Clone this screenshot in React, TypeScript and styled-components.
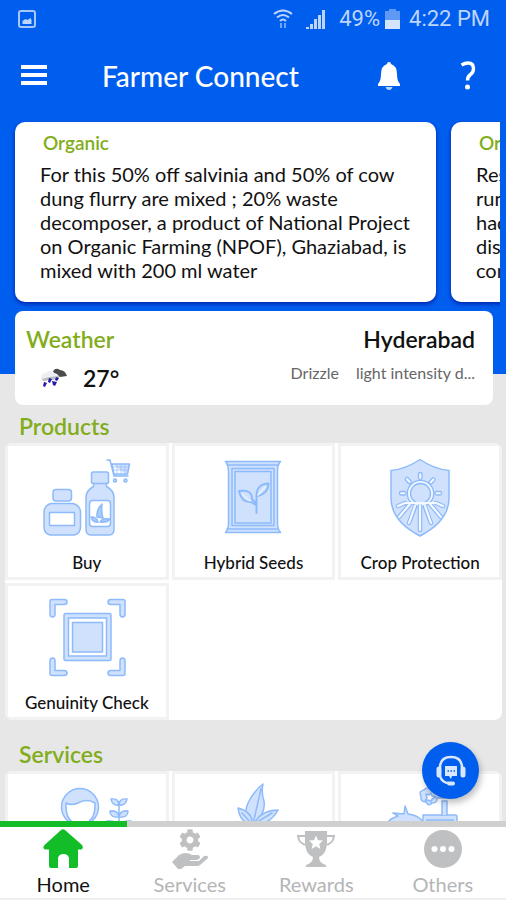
import React, { useState } from "react";
import styled, { createGlobalStyle } from "styled-components";
import { FaCog } from "react-icons/fa";

const GlobalStyle = createGlobalStyle`
  * { box-sizing: border-box; }
  html, body, #root { height: 100%; }
  body { margin: 0; font-family: Lato, "Noto Sans", sans-serif; color: #111; background: #e7e7e7; }
  h1, h2, p { margin: 0; }
  button { font: inherit; color: inherit; border: 0; padding: 0; background: none; cursor: pointer; }
  svg { display: block; flex: none; }
`;

const BLUE = "#005eee";
const GREEN = "#82ad1b";

const Screen = styled.div`
  position: relative;
  display: flex;
  flex-direction: column;
  height: 100vh;
  overflow: hidden;
`;

const Content = styled.main`
  flex: 1;
  min-height: 0;
  overflow: hidden;
`;

const Hero = styled.div`
  background: ${BLUE};
  padding-bottom: 63px;
`;

const StatusBar = styled.div`
  display: flex;
  align-items: center;
  height: 38px;
  padding: 0 16px 0 18px;
  color: #bdd5fc;
  font: 22px/24px Roboto, sans-serif;
`;

const StatusGroup = styled.div`
  display: flex;
  align-items: center;
  margin-left: auto;
`;

const SignalIcon = styled.svg`
  margin: 0 13px;
`;

const BatteryIcon = styled.svg`
  margin: 0 9px 0 5px;
`;

const AppBar = styled.header`
  display: flex;
  align-items: center;
  height: 76px;
  padding: 0 23px 0 19px;
  color: #fff;
`;

const IconButton = styled.button`
  display: flex;
  align-items: center;
  justify-content: center;
  width: 30px;
  height: 40px;
`;

const Title = styled.h1`
  flex: 1;
  margin-left: 53px;
  font-size: 28px;
  font-weight: 500;
  line-height: 34px;
`;

const HelpButton = styled(IconButton)`
  margin-left: 49px;
`;

const Carousel = styled.div`
  display: flex;
  gap: 15px;
  margin-right: 6px;
  padding: 8px 0 9px 15px;
  overflow: hidden;
`;

const TipCard = styled.article`
  flex: 0 0 calc(100% - 64px);
  height: 180px;
  padding: 9px 25px;
  border-radius: 10px;
  background: #fff;
  box-shadow: 0 2px 4px #0023a8;
`;

const TipTitle = styled.h2`
  padding-left: 3px;
  color: ${GREEN};
  font-size: 19px;
  font-weight: 600;
  line-height: 24px;
`;

const TipText = styled.p`
  margin-top: 7px;
  font-size: 20px;
  line-height: 24px;
  white-space: pre-line;
`;

const WeatherCard = styled.section`
  position: relative;
  display: flex;
  justify-content: space-between;
  height: 94px;
  margin: -63px 13px 0 15px;
  padding: 14px 18px 0 11px;
  border-radius: 8px;
  background: #fff;
`;

const WeatherColumn = styled.div<{ $end?: boolean }>`
  display: flex;
  flex-direction: column;
  align-items: ${(p) => (p.$end ? "flex-end" : "flex-start")};
  gap: ${(p) => (p.$end ? 8 : 12)}px;
`;

const SectionTitle = styled.h2`
  color: ${GREEN};
  font-size: 23px;
  font-weight: 600;
  line-height: 28px;
`;

const City = styled.p`
  font-size: 23px;
  font-weight: 600;
  line-height: 28px;
`;

const Temperature = styled.div`
  display: flex;
  align-items: center;
  gap: 16px;
  padding-left: 14px;
  font-size: 23px;
  font-weight: 600;
  line-height: 26px;
`;

const Conditions = styled.div`
  display: flex;
  gap: 17px;
  color: #666;
  font-size: 16px;
  line-height: 24px;
`;

const Section = styled.section<{ $top: number }>`
  padding: ${(p) => p.$top}px 4px 0 5px;

  ${SectionTitle} {
    padding-left: 14px;
  }
`;

const Panel = styled.div`
  display: grid;
  grid-template-columns: repeat(3, 1fr);
  gap: 3px;
  margin-top: 3px;
  border-radius: 8px;
  overflow: hidden;
  background: #fff;
`;

const Tile = styled.button`
  display: flex;
  flex-direction: column;
  align-items: center;
  height: 137px;
  padding-top: 7px;
  border: 3px solid #f2f2f2;
`;

const TileLabel = styled.span`
  margin-top: 10px;
  font-size: 17px;
  font-weight: 500;
  line-height: 20px;
  white-space: nowrap;
`;

const TabBar = styled.nav`
  display: grid;
  grid-template-columns: repeat(4, 1fr);
  height: 79px;
  border-bottom: 2px solid #eee;
  background: #fff;
`;

const Tab = styled.button<{ $active: boolean }>`
  display: flex;
  flex-direction: column;
  align-items: center;
  gap: 3px;
  padding-top: 2px;
  border-top: 6px solid ${(p) => (p.$active ? "#13bd27" : "#d0d0d0")};
  color: ${(p) => (p.$active ? "#111" : "#b4b5b7")};
  font-size: 20px;
  line-height: 24px;
`;

const HandGear = styled.span`
  display: flex;
  flex-direction: column;
  align-items: center;
  height: 40px;
  color: #bfc0c2;
`;

const SupportButton = styled.button`
  position: absolute;
  right: 27px;
  bottom: 101px;
  display: flex;
  align-items: center;
  justify-content: center;
  width: 57px;
  height: 57px;
  border-radius: 50%;
  background: ${BLUE};
  box-shadow: 2px 4px 6px rgba(0, 0, 0, 0.25);
`;

const LINE = "#8dbafa";
const FILL = "#cfe1fd";

function Art({ children }: { children: React.ReactNode }) {
  return (
    <svg width="120" height="90" viewBox="0 0 120 90" fill={FILL} stroke={LINE} strokeWidth="1.5" strokeLinejoin="round" strokeLinecap="round" aria-hidden="true">
      {children}
    </svg>
  );
}

const BuyArt = () => (
  <Art>
    <rect x="26" y="36.500" width="18.500" height="11.500" rx="3" />
    <path d="M24 50.500h22q7.500 2 7.500 9v14q0 7-6 8.500H23q-6-1.500-6-8.500v-14q0-7 7-9Z" />
    <path d="M22.500 59.500h25v13h-25Z" fill="#fff" />
    <path d="M66.500 19h13q2 0 2 2v8q0 1.500-2 1.500v3q7.500 4 7.500 11V76q0 6-5 6H64q-5 0-5-6V44.500q0-7 7.500-11v-3q-2 0-2-1.500v-8q0-2 2-2Z" />
    <path d="M66.500 30.500h13" />
    <rect x="62.500" y="47.500" width="21" height="26" rx="3" fill="#fff" />
    <path d="M70 64q-1-7 5-13-1 8 1 14ZM71 69q-1-5-7-5 2 6 7 5ZM73 69q2-4 10-3-3 4-10 3Z" fill="#a9ccfc" />
    <path d="M80 7h3l4 16h14M85 11h17.500l-2 10H87Z" />
    <path d="M90 12v8M94 12v8M98 12v8M86 14h15M87 17h14" strokeWidth=".6" />
    <circle cx="88" cy="27.500" r="1.500" /><circle cx="98.500" cy="27.500" r="1.500" />
  </Art>
);

const SeedsArt = () => (
  <Art>
    <path d="M32.500 8.500h55q-3 3-3 10v51q0 7 3 10h-55q3-3 3-10v-51q0-7-3-10Z" />
    <path d="M34 12h51M34 76h51" />
    <path d="M39 15.500h42v57H39Z" fill="none" />
    <path d="M42 18.500h36V70H42Z" />
    <path d="M63.500 60V43q0-12 12-12.500Q75 41 64 43M63.500 52q-3-1-5-3-10 1-12.500-11 13-2 13 8l4 4" strokeWidth="2" />
    <path d="m65 42 7-8M57 48l-8-7" stroke="#e7f0fe" />
  </Art>
);

const ShieldArt = () => (
  <Art>
    <path d="M60 6.500Q74 16 89 17.500V45Q89 68 60 83 31 68 31 45V17.500Q46 16 60 6.500Z" />
    <g fill="#f2f7ff" strokeWidth="1.300">
      <rect x="58.500" y="19.500" width="3.500" height="7" rx="1.500" />
      <rect x="58.500" y="19.500" width="3.500" height="7" rx="1.500" transform="rotate(-43 60 40.500)" />
      <rect x="58.500" y="19.500" width="3.500" height="7" rx="1.500" transform="rotate(43 60 40.500)" />
      <rect x="39.500" y="38.500" width="6.500" height="3.500" rx="1.500" />
      <rect x="75" y="38.500" width="6.500" height="3.500" rx="1.500" />
      <circle cx="60.500" cy="40.500" r="13.200" />
      <circle cx="60.500" cy="40.500" r="10" fill={FILL} />
    </g>
    <g stroke={LINE} strokeWidth="4.500"><path d="M60 53v24M55 54l-6 16M65 54l6 16M50 51 39 64M70 51l11 13M45 50l-7 3M76 50l7 3" /></g>
    <g stroke="#f4f8ff" strokeWidth="2.200"><path d="M60 52v25M55 53l-6 17M65 53l6 17M50 51 39 64M70 51l11 13M45 50l-7 3M76 50l7 3M45 50h31" fill="none" /></g>
  </Art>
);

const ScanArt = () => (
  <Art>
    <path d="M25 6.500h12q3 0 3 2.500t-3 2.500h-9V21q0 3-2.500 3t-2.500-3V8.500q0-2 2-2ZM96 6.500H84q-3 0-3 2.500t3 2.500h9V21q0 3 2.500 3t2.500-3V8.500q0-2-2-2ZM25 82.500h12q3 0 3-2.500t-3-2.500h-9V68q0-3-2.500-3T23 68v12.500q0 2 2 2ZM96 82.500H84q-3 0-3-2.500t3-2.500h9V68q0-3 2.500-3t2.500 3v12.500q0 2-2 2Z" />
    <rect x="37" y="20.500" width="47" height="47" rx="1.500" />
    <path d="M41.500 25h38v38h-38Z" fill="#fff" />
    <path d="M45.500 29.500h30v29.500h-30Z" />
  </Art>
);

const FarmerArt = () => (
  <Art>
    <circle cx="53" cy="26" r="18.500" />
    <path d="M39 22q5 3 12 0 9-5 17 0 1 20-15 22Q38 42 39 22Z" fill="#fff" />
    <path d="M92 60V24M92 24q-7 1-8-6 8-1 8 6ZM92 24q7 1 8-6-8-1-8 6ZM92 36q-9 1-9-6 8-1 9 6ZM92 36q9 1 9-6-8-1-9 6ZM92 47q-11 1-12-7 11-1 12 7ZM92 47q11 1 12-7-11-1-12 7Z" />
  </Art>
);

const LeafArt = () => (
  <Art>
    <path d="M60 43q-12-9-4-23 6-11 14-17-2 8 1 17 2 13-11 23ZM60 43 68 8" />
    <path d="M59 43Q47 42 45 27q15 4 14 16ZM59 43 49 32M61 43q7-14 24-14-8 15-24 14ZM61 43l18-11" />
    <path d="M60 43v22" />
  </Art>
);

const MachineryArt = () => (
  <Art>
    <path d="M23 54q1-15 15-19l-5-3 11 1 1-8 3 8q12 1 18 12v12Z" />
    <path d="M63 34h32q2 0 2 2v22H63ZM67 39h26v16H67Z" />
    <path d="M82 34V20h5v14" />
    <path d="M61 15q-3-5 3-6 3-4 7 0 4-2 6 2h7v6h-7q1 5-5 5-3 4-6-1-6 0-5-6Z" />
    <path d="M66 13l3 1 2-2 1 3 4 1-4 2-1 3-2-2-4 1 2-3Z" fill="#fff" />
  </Art>
);

const products = [
  { label: "Buy", Icon: BuyArt },
  { label: "Hybrid Seeds", Icon: SeedsArt },
  { label: "Crop Protection", Icon: ShieldArt },
  { label: "Genuinity Check", Icon: ScanArt },
];

const services = [
  { label: "Farmer Advisory", Icon: FarmerArt },
  { label: "Crop Diagnosis", Icon: LeafArt },
  { label: "Farm Equipment", Icon: MachineryArt },
];

const HomeIcon = () => (
  <svg width="40" height="40" viewBox="0 0 40 40" fill="#13bd27" aria-hidden="true">
    <path d="M17.500 1.500q2.500-2.500 5 0l16 14q2 2 1 4-1 1.500-3 1H35V37q0 2-2 2h-7V29q-1-4-5.500-4T15 29v10H8q-2 0-2-2V20.500H4q-3 .5-3.500-1.500-.5-1.500 1-3Z" />
  </svg>
);

const HandGearIcon = () => (
  <HandGear>
    <FaCog size={22} />
    <svg width="38" height="18" viewBox="0 0 38 18" fill="currentColor" aria-hidden="true">
      <path d="m1 11 7-7q7-4 13 0h5q3 0 3 2t-3 3h-7v1h9l5-5q3-1 4 1 .5 1-1 2l-7 6q-1 1-3 1H14l-4 3H7Z" />
    </svg>
  </HandGear>
);

const TrophyIcon = () => (
  <svg width="40" height="40" viewBox="0 0 40 40" fill="#bfc0c2" aria-hidden="true">
    <path d="M10 7H2q1 9 10 9M30 7h8q-1 9-10 9" fill="none" stroke="#bfc0c2" strokeWidth="2" />
    <path d="M9 2h22v11q0 12-8 15 0 6 7 8v2H10v-2q7-2 7-8-8-3-8-15Z" />
    <path d="m20 6.500 2 4.700 5 .4-3.800 3.300 1.200 5-4.400-2.700-4.400 2.700 1.200-5-3.800-3.300 5-.4Z" fill="#fff" />
  </svg>
);

const OthersIcon = () => (
  <svg width="40" height="40" viewBox="0 0 40 40" aria-hidden="true">
    <circle cx="20" cy="20" r="19" fill="#bfc0c2" />
    <g fill="#fff"><circle cx="11.500" cy="20" r="3" /><circle cx="20" cy="20" r="3" /><circle cx="28.500" cy="20" r="3" /></g>
  </svg>
);

const tabs = [
  { label: "Home", Icon: HomeIcon },
  { label: "Services", Icon: HandGearIcon },
  { label: "Rewards", Icon: TrophyIcon },
  { label: "Others", Icon: OthersIcon },
];

const tips = [
  "For this 50% off salvinia and 50% of cow dung flurry are mixed ; 20% waste decomposer, a product of National Project on Organic Farming (NPOF), Ghaziabad, is mixed with 200 ml water",
  "Residues left in the field after\nrunning the harvester\nhad to be collected and\ndistributed evenly over the\ncompost bed",
];

export default function App() {
  const [active, setActive] = useState("Home");
  return (
    <Screen>
      <GlobalStyle />
      <Content>
        <Hero>
          <StatusBar>
            <svg width="18" height="20" viewBox="0 0 18 20" fill="none" stroke="#a6c7fb" strokeWidth="2" aria-hidden="true">
              <rect x="1" y="2" width="16" height="16" rx="2" />
              <path d="M4.500 15v-3l3-2 2 1 3-2 1 2v4Z" fill="#bdd5fc" stroke="none" />
            </svg>
            <StatusGroup>
              <svg width="20" height="20" viewBox="0 0 20 20" fill="none" stroke="currentColor" strokeWidth="2" aria-hidden="true">
                <path d="M1 5q9-7 18 0M4 8.500q6-5 12 0M7 12q3-3 6 0" />
                <path d="M8 14v5M12 14v5" stroke="#6ea3f6" />
              </svg>
              <SignalIcon width="20" height="20" viewBox="0 0 20 20" fill="currentColor" aria-hidden="true">
                <path d="M0 18h3v2H0ZM4 15h3v5H4ZM8 10h3v10H8ZM12 6h3v14h-3ZM16 1h3v19h-3Z" />
              </SignalIcon>
              <span>49%</span>
              <BatteryIcon width="15" height="20" viewBox="0 0 15 20" aria-hidden="true">
                <path d="M4 0h7v2h4v18H0V2h4Z" fill="#5f99f5" />
                <path d="M0 11h15v9H0Z" fill="#d5e4fd" />
              </BatteryIcon>
              <span>4:22 PM</span>
            </StatusGroup>
          </StatusBar>
          <AppBar>
            <IconButton aria-label="Menu">
              <svg width="28" height="22" viewBox="0 0 28 22" fill="#fff"><path d="M1 0h26v4H1ZM1 8h26v4H1ZM1 16h26v4H1Z" /></svg>
            </IconButton>
            <Title>Farmer Connect</Title>
            <IconButton aria-label="Notifications">
              <svg width="24" height="30" viewBox="0 0 24 30" fill="#fff">
                <path d="M10 3q0-2 2-2t2 2q6 2 6 10 0 7 3 10v2H1v-2q3-3 3-10 0-8 6-10Z" />
                <path d="M8.500 26h7q-1 3-3.500 3t-3.500-3Z" opacity=".75" />
              </svg>
            </IconButton>
            <HelpButton aria-label="Help">
              <svg width="18" height="32" viewBox="0 0 18 32" fill="none" stroke="#fff" strokeWidth="3.400">
                <path d="M2.500 5Q6 3 9 3q5.500 0 5.500 5.500 0 4-3 6-3 2-3 6" />
                <circle cx="8.500" cy="27" r="2.500" fill="#fff" stroke="none" />
              </svg>
            </HelpButton>
          </AppBar>
          <Carousel>
            {tips.map((tip) => (
              <TipCard key={tip}>
                <TipTitle>Organic</TipTitle>
                <TipText>{tip}</TipText>
              </TipCard>
            ))}
          </Carousel>
        </Hero>
        <WeatherCard>
          <WeatherColumn>
            <SectionTitle>Weather</SectionTitle>
            <Temperature>
              <svg width="27" height="20" viewBox="0 0 27 20" aria-hidden="true">
                <path d="M13 3q3-4 7-1 5 0 7 6l-7 1-6-4Z" fill="#4b4b4b" />
                <path d="M1 10q0-5 5-5 3-4 7 0 5 0 6 4v3H2Z" fill="#eceef4" />
                <path d="m2 11 8-2 9-1-1 3-8 1-7 1Z" fill="#bbb" />
                <path d="m4 14 3 1-2 4-2-1ZM9 10l3 1-2 4-2-1ZM12 13l5 1-2 4-2-1ZM16 9l3 1-2 3-2-1Z" fill="#221aa8" />
              </svg>
              <span>27°</span>
            </Temperature>
          </WeatherColumn>
          <WeatherColumn $end>
            <City>Hyderabad</City>
            <Conditions>
              <span>Drizzle</span>
              <span>light intensity d...</span>
            </Conditions>
          </WeatherColumn>
        </WeatherCard>
        <Section $top={7}>
          <SectionTitle>Products</SectionTitle>
          <Panel>
            {products.map(({ label, Icon }) => (
              <Tile key={label}>
                <Icon />
                <TileLabel>{label}</TileLabel>
              </Tile>
            ))}
          </Panel>
        </Section>
        <Section $top={20}>
          <SectionTitle>Services</SectionTitle>
          <Panel>
            {services.map(({ label, Icon }) => (
              <Tile key={label} aria-label={label}>
                <Icon />
              </Tile>
            ))}
          </Panel>
        </Section>
      </Content>
      <SupportButton aria-label="Support chat">
        <svg width="30" height="32" viewBox="0 0 30 32" fill="none" stroke="#d9e8ff" strokeWidth="2.500" aria-hidden="true">
          <path d="M4 13Q4 2 15 2t11 11" />
          <path d="M3 14v6M27 14v6" strokeWidth="5" strokeLinecap="round" />
          <path d="M4 21q2 7 9 7" />
          <path d="M13 28.500h4" strokeWidth="4" strokeLinecap="round" />
          <path d="M9 11h12v10h-5l-1 3-2-3H9Z" fill="#d9e8ff" stroke="none" />
          <path d="M11.500 16h1.500M14.500 16H16M17.500 16H19" stroke="#005eee" strokeWidth="1.500" />
        </svg>
      </SupportButton>
      <TabBar>
        {tabs.map(({ label, Icon }) => (
          <Tab key={label} $active={active === label} onClick={() => setActive(label)}>
            <Icon />
            <span>{label}</span>
          </Tab>
        ))}
      </TabBar>
    </Screen>
  );
}
